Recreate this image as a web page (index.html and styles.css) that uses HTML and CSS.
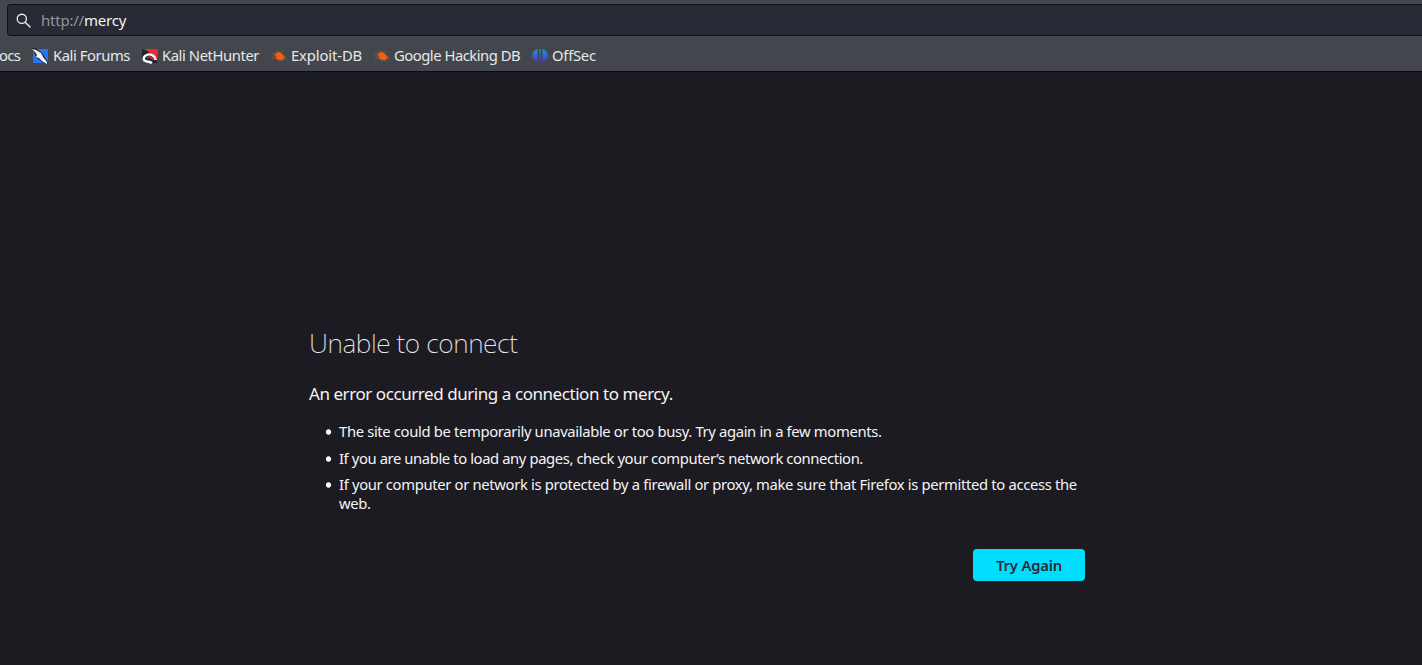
FILE: index.html
```html
<!DOCTYPE html>
<html lang="en">
<head>
<meta charset="utf-8">
<title>Problem loading page</title>
<link rel="stylesheet" href="styles.css">
</head>
<body>
<header class="chrome">
  <div class="urlbar">
    <svg class="search" viewBox="0 0 16 16"><circle cx="6.2" cy="6.2" r="4.9"/><path d="M9.8 9.8 15 15"/></svg>
    <span class="url"><span class="scheme">http://</span>mercy</span>
  </div>
  <nav class="bookmarks">
    <a class="bookmark docs">ocs</a>
    <a class="bookmark forums"><svg class="icon" viewBox="0 0 16 16"><path fill="#2377f4" d="M1 1h15v14H1z"/><path fill="#222832" d="M0 0h4l6 5 4 6 2 3-1 2-5-2-6-5z"/><path fill="#f4f6f8" d="M0 1l4 1 5 3 2 4 4 5v2l-5-3-3-3-3-1 1-2-2-3z"/></svg><span>Kali Forums</span></a>
    <a class="bookmark nethunter"><svg class="icon" viewBox="0 0 16 16"><path fill="#f5262f" d="M3 1h13l-1 12-5-6z"/><path fill="#202329" d="M0 1l5 2 5 3 4 5 1 4H3L0 10z"/><path fill="#f5262f" d="M4 1.500h11L13.500 8 9 5z"/><path fill="none" stroke="#fff" stroke-width="2.400" d="M13.500 12C13 7 8 5.500 4.500 7 .5 9 1 13 5 13.500c2 .2 3 .3 5 1.500"/><path fill="none" stroke="#e52d36" stroke-width="1.300" d="M11 12c-1-3-4-4-6-2"/></svg><span>Kali NetHunter</span></a>
    <a class="bookmark exploit"><svg class="icon" viewBox="0 0 16 16"><path fill="#ed6218" d="M2.500 4.500l3 1 1-2 3 1 2 2 2 2 1.500 2-2.500 0-1 2-3-.5-2-.5-2-1.500 1-1.500-2-1.500 1.500-.5z"/><path stroke="#a75027" stroke-width=".8" d="M0 5l5 2M1 11l4-2M7 11l1 3M10 6l2-3M12 9l3 1M1 8h4M5 2l2 3M11 11l2 2"/></svg><span>Exploit-DB</span></a>
    <a class="bookmark hacking"><svg class="icon" viewBox="0 0 16 16"><path fill="#ed6218" d="M2.500 4.500l3 1 1-2 3 1 2 2 2 2 1.500 2-2.500 0-1 2-3-.5-2-.5-2-1.500 1-1.500-2-1.500 1.500-.5z"/><path stroke="#a75027" stroke-width=".8" d="M0 5l5 2M1 11l4-2M7 11l1 3M10 6l2-3M12 9l3 1M1 8h4M5 2l2 3M11 11l2 2"/></svg><span>Google Hacking DB</span></a>
    <a class="bookmark offsec"><svg class="icon" viewBox="0 0 16 16"><defs><linearGradient id="wing" gradientUnits="userSpaceOnUse" x1="0" y1="0" x2="0" y2="15"><stop stop-color="#10a9c4"/><stop offset="1" stop-color="#5528d3"/></linearGradient></defs><path fill="url(#wing)" d="M5.600 1l-.3 13C-1.500 11.500-1.500 3 5.600 1zM10.400 1l.3 13c6.800-2.500 6.800-11-.3-13zM7.400 1h1.200v14.500H7.400z"/></svg><span>OffSec</span></a>
  </nav>
</header>
<main class="error">
  <h1 class="title">Unable to connect</h1>
  <p class="lead">An error occurred during a connection to mercy.</p>
  <ul class="tips">
    <li class="busy">The site could be temporarily unavailable or too busy. Try again in a few moments.</li>
    <li class="network">If you are unable to load any pages, check your computer’s network connection.</li>
    <li class="firewall">If your computer or network is protected by a firewall or proxy, make sure that Firefox is permitted to access the<br>web.</li>
  </ul>
  <div class="actions"><button class="retry">Try Again</button></div>
</main>
</body>
</html>
```
FILE: styles.css
```css
* { box-sizing: border-box; }
body { margin: 0; height: 665px; overflow: hidden; background: #1c1b22; color: #f4f4f7; font-family: "Noto Sans", sans-serif; }
.chrome { height: 72px; padding: 4px 0 0 7px; background: #43474d; border-bottom: 1px solid #0c0c0d; }
.urlbar { height: 32px; display: flex; align-items: center; gap: 10px; padding-left: 8px; background: #282a36; border: 1px solid #0f1014; border-right: 0; border-radius: 4px 0 0 4px; font-size: 15px; letter-spacing: -0.22px; }
.search { width: 15px; height: 15px; fill: none; stroke: #f0f0f4; stroke-width: 1.4; stroke-linecap: round; }
.scheme { color: #93949b; }
.bookmarks { display: flex; align-items: center; height: 34px; margin-top: 2px; margin-left: -8px; font-size: 14.8px; color: #e6e7e8; white-space: nowrap; }
.bookmark { display: flex; align-items: center; gap: 4px; }
.docs { width: 34px; letter-spacing: -0.6px; }
.forums { width: 109px; letter-spacing: -0.43px; }
.nethunter { width: 129px; letter-spacing: -0.42px; }
.exploit { width: 103px; letter-spacing: -0.12px; }
.hacking { width: 158px; letter-spacing: -0.48px; }
.offsec { letter-spacing: -0.25px; }
.icon { width: 16px; height: 16px; flex: none; position: relative; top: 1px; }
.forums .icon { margin-left: -1px; margin-right: 1px; }
.error { width: 776px; margin-left: 309px; padding-top: 251px; }
.title { margin: 0; font-size: 26.4px; font-weight: 200; line-height: 40px; letter-spacing: -0.42px; color: #e8e8ec; }
.lead { margin: 21px 0 0; font-size: 17px; line-height: 20px; letter-spacing: -0.44px; }
.tips { list-style: none; margin: 18px 0 0; padding-left: 13px; font-size: 14.8px; line-height: 19px; white-space: nowrap; }
.tips li { display: flow-root; margin-bottom: 7.5px; padding-left: 17px; background: radial-gradient(circle at 6.5px 10px, #fbfbfe 2.3px, transparent 3.1px); }
.busy { letter-spacing: -0.35px; }
.network { letter-spacing: -0.4px; }
.firewall { letter-spacing: -0.34px; }
.actions { display: flex; justify-content: flex-end; margin-top: 36px; }
.retry { width: 112px; height: 32px; padding: 0; border: 0; border-radius: 4px; background: #00ddff; color: #2b2a33; font: 600 14.8px "Noto Sans", sans-serif; letter-spacing: -0.2px; }
```
